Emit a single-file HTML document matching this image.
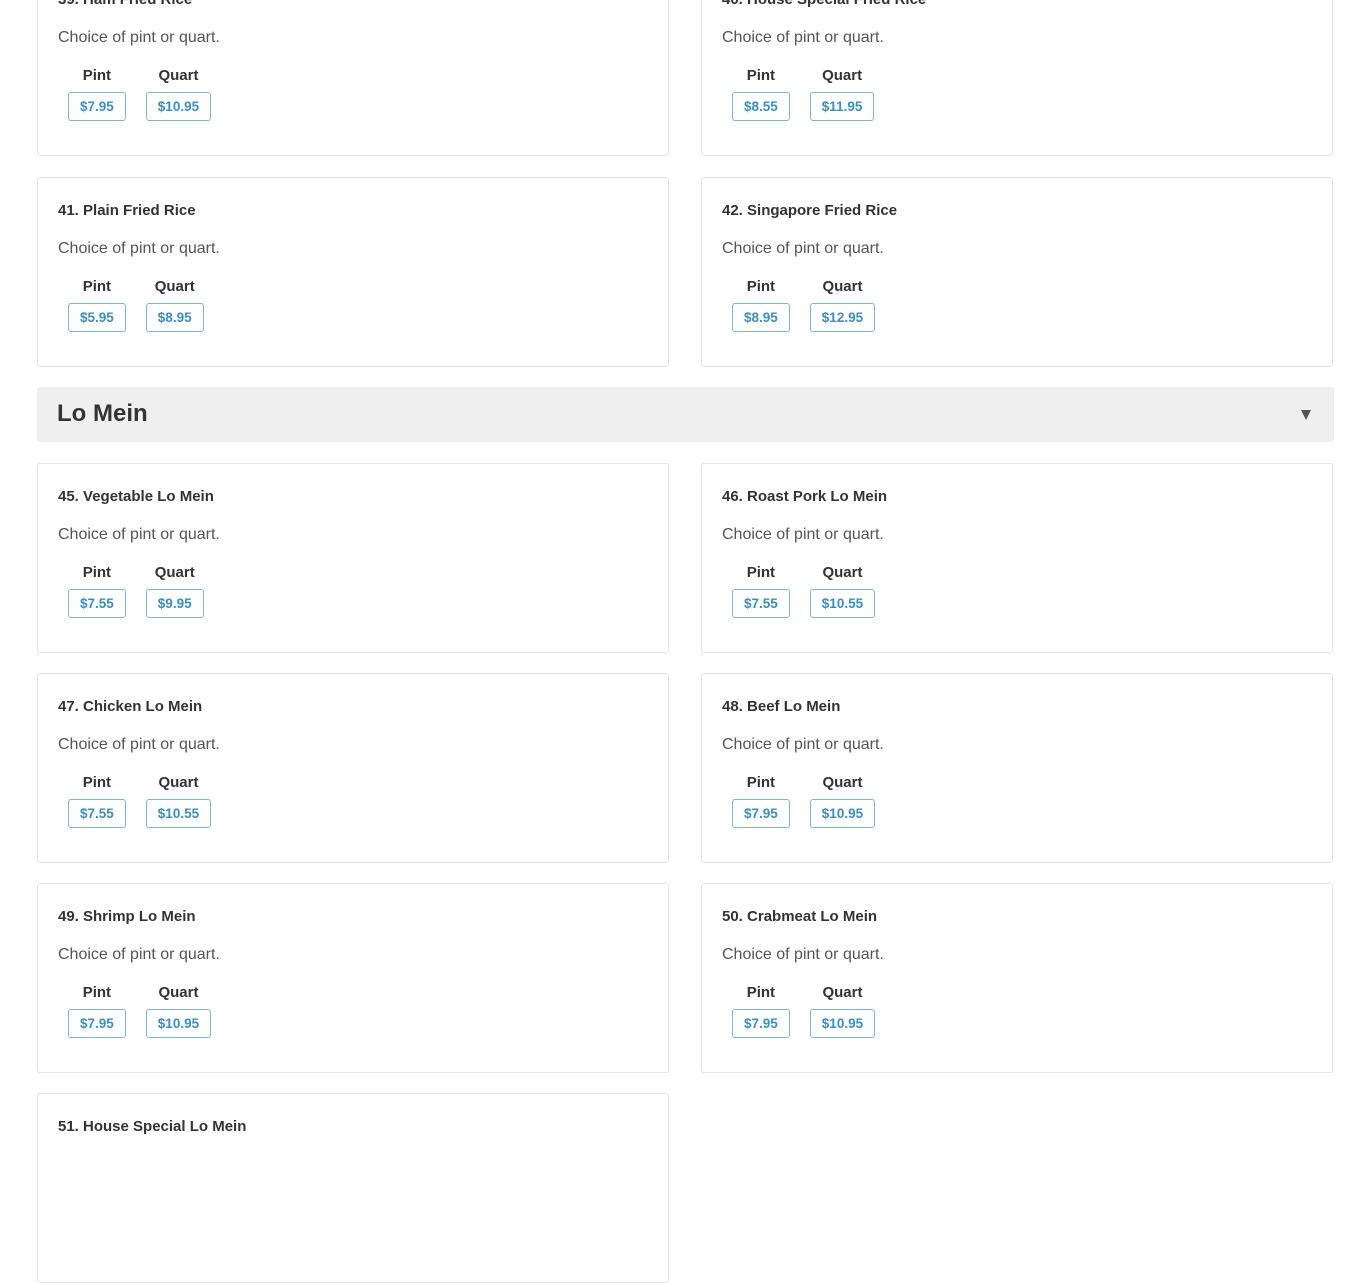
<!DOCTYPE html>
<html><head><meta charset="utf-8"><style>
body{margin:0;width:1370px;height:1144px;overflow:hidden;background:#fff;font-family:"Liberation Sans",sans-serif;position:relative}
.c{position:absolute;width:630px;height:188px;border:1px solid #e3e3e3;border-radius:3px;background:#fff}
.t{position:absolute;left:20px;top:23px;font-size:15px;font-weight:bold;color:#333;line-height:20px}
.d{position:absolute;left:20px;top:61px;font-size:16px;color:#555;line-height:20px}
.p{position:absolute;top:98px;display:flex;gap:20px;left:30px}
.col{display:flex;flex-direction:column;align-items:center}
.l{font-size:15px;font-weight:bold;color:#333;line-height:22px;height:27px}
.b{border:1px solid #7fb5d5;border-radius:3px;color:#3a8fc0;font-size:13.5px;font-weight:bold;height:27px;line-height:27px;padding:0 11px;min-width:33px;text-align:center}
.h{position:absolute;left:37px;top:387px;width:1297px;height:55px;background:#efefef;border-radius:3px}
.h span{position:absolute;left:20px;top:13px;font-size:24px;color:#333;font-weight:bold;font-family:"Liberation Sans",sans-serif}
.h i{position:absolute;right:23px;top:23px;width:0;height:0;border-left:5px solid transparent;border-right:5px solid transparent;border-top:10px solid #555}
</style></head><body>
<div class="c" style="left:37px;top:-34px"><div class="t">39. Ham Fried Rice</div><div class="d">Choice of pint or quart.</div><div class="p"><div class="col"><div class="l">Pint</div><div class="b">$7.95</div></div><div class="col"><div class="l">Quart</div><div class="b">$10.95</div></div></div></div>
<div class="c" style="left:701px;top:-34px"><div class="t">40. House Special Fried Rice</div><div class="d">Choice of pint or quart.</div><div class="p"><div class="col"><div class="l">Pint</div><div class="b">$8.55</div></div><div class="col"><div class="l">Quart</div><div class="b">$11.95</div></div></div></div>
<div class="c" style="left:37px;top:177px"><div class="t">41. Plain Fried Rice</div><div class="d">Choice of pint or quart.</div><div class="p"><div class="col"><div class="l">Pint</div><div class="b">$5.95</div></div><div class="col"><div class="l">Quart</div><div class="b">$8.95</div></div></div></div>
<div class="c" style="left:701px;top:177px"><div class="t">42. Singapore Fried Rice</div><div class="d">Choice of pint or quart.</div><div class="p"><div class="col"><div class="l">Pint</div><div class="b">$8.95</div></div><div class="col"><div class="l">Quart</div><div class="b">$12.95</div></div></div></div>
<div class="h"><span>Lo Mein</span><i></i></div>
<div class="c" style="left:37px;top:463px"><div class="t">45. Vegetable Lo Mein</div><div class="d">Choice of pint or quart.</div><div class="p"><div class="col"><div class="l">Pint</div><div class="b">$7.55</div></div><div class="col"><div class="l">Quart</div><div class="b">$9.95</div></div></div></div>
<div class="c" style="left:701px;top:463px"><div class="t">46. Roast Pork Lo Mein</div><div class="d">Choice of pint or quart.</div><div class="p"><div class="col"><div class="l">Pint</div><div class="b">$7.55</div></div><div class="col"><div class="l">Quart</div><div class="b">$10.55</div></div></div></div>
<div class="c" style="left:37px;top:673px"><div class="t">47. Chicken Lo Mein</div><div class="d">Choice of pint or quart.</div><div class="p"><div class="col"><div class="l">Pint</div><div class="b">$7.55</div></div><div class="col"><div class="l">Quart</div><div class="b">$10.55</div></div></div></div>
<div class="c" style="left:701px;top:673px"><div class="t">48. Beef Lo Mein</div><div class="d">Choice of pint or quart.</div><div class="p"><div class="col"><div class="l">Pint</div><div class="b">$7.95</div></div><div class="col"><div class="l">Quart</div><div class="b">$10.95</div></div></div></div>
<div class="c" style="left:37px;top:883px"><div class="t">49. Shrimp Lo Mein</div><div class="d">Choice of pint or quart.</div><div class="p"><div class="col"><div class="l">Pint</div><div class="b">$7.95</div></div><div class="col"><div class="l">Quart</div><div class="b">$10.95</div></div></div></div>
<div class="c" style="left:701px;top:883px"><div class="t">50. Crabmeat Lo Mein</div><div class="d">Choice of pint or quart.</div><div class="p"><div class="col"><div class="l">Pint</div><div class="b">$7.95</div></div><div class="col"><div class="l">Quart</div><div class="b">$10.95</div></div></div></div>
<div class="c" style="left:37px;top:1093px"><div class="t">51. House Special Lo Mein</div></div>
</body></html>
